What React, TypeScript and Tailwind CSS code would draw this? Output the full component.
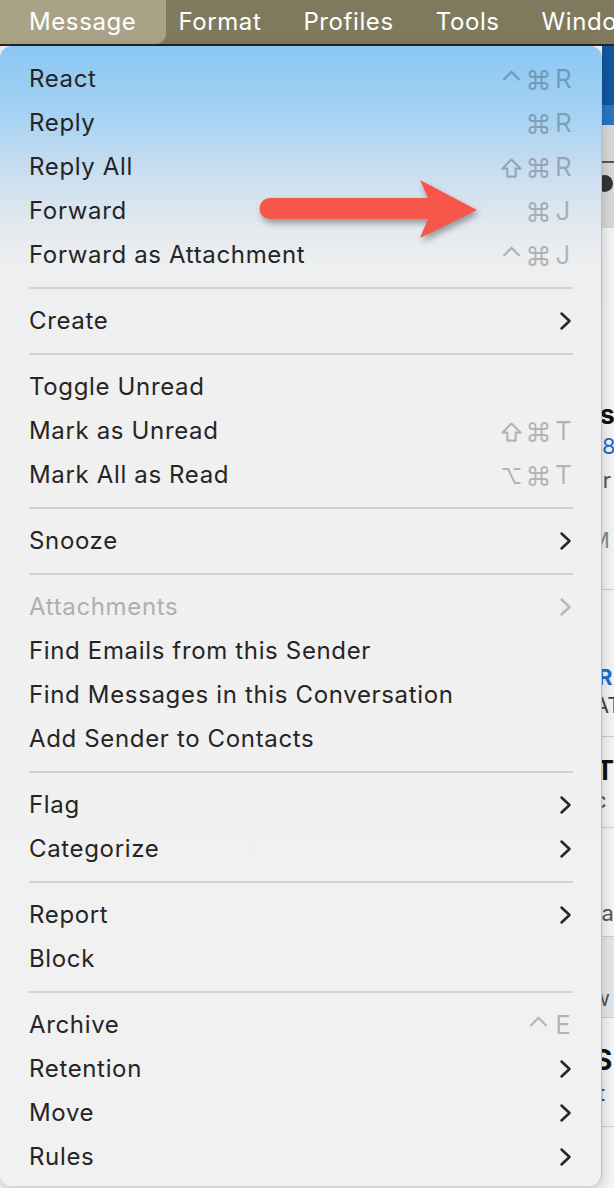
import React from "react";

type Item =
  | { sep: true }
  | { label: string; keys?: string[]; sub?: boolean; disabled?: boolean };

const items: Item[] = [
  { label: "React", keys: ["ctrl", "cmd", "R"] },
  { label: "Reply", keys: ["cmd", "R"] },
  { label: "Reply All", keys: ["shift", "cmd", "R"] },
  { label: "Forward", keys: ["cmd", "J"] },
  { label: "Forward as Attachment", keys: ["ctrl", "cmd", "J"] },
  { sep: true },
  { label: "Create", sub: true },
  { sep: true },
  { label: "Toggle Unread" },
  { label: "Mark as Unread", keys: ["shift", "cmd", "T"] },
  { label: "Mark All as Read", keys: ["opt", "cmd", "T"] },
  { sep: true },
  { label: "Snooze", sub: true },
  { sep: true },
  { label: "Attachments", sub: true, disabled: true },
  { label: "Find Emails from this Sender" },
  { label: "Find Messages in this Conversation" },
  { label: "Add Sender to Contacts" },
  { sep: true },
  { label: "Flag", sub: true },
  { label: "Categorize", sub: true },
  { sep: true },
  { label: "Report", sub: true },
  { label: "Block" },
  { sep: true },
  { label: "Archive", keys: ["ctrl", "E"] },
  { label: "Retention", sub: true },
  { label: "Move", sub: true },
  { label: "Rules", sub: true },
];

function Chevron({ disabled }: { disabled?: boolean }) {
  return (
    <svg width="14" height="22" viewBox="0 0 14 22" className="block -mr-[1px]">
      <path
        d="M3.5 3.5 L11.5 11 L3.5 18.5"
        fill="none"
        stroke={disabled ? "#b9b9b9" : "#252525"}
        strokeWidth="2.5"
        strokeLinecap="round"
        strokeLinejoin="round"
      />
    </svg>
  );
}

const glyphs: Record<string, string> = {
  cmd: "M7 7 V4 A3 3 0 1 0 4 7 H16 A3 3 0 1 0 13 4 V16 A3 3 0 1 0 16 13 H4 A3 3 0 1 0 7 16 Z",
  ctrl: "M2 10 L10 1.8 L18 10",
  shift: "M10 1.6 L19 10.6 H14.2 V18.6 H5.8 V10.6 H1 Z",
  opt: "M1 3 H6.6 L13.4 17 H19 M12 3 H19",
};

function Key({ k }: { k: string }) {
  if (glyphs[k]) {
    return (
      <svg
        width="21"
        height="20"
        viewBox="-0.5 0 21 20"
        className="block translate-y-[1px]"
      >
        <path
          d={glyphs[k]}
          fill="none"
          stroke="currentColor"
          strokeWidth={k === "cmd" ? 1.9 : 2.1}
          strokeLinejoin={k === "ctrl" ? "miter" : "round"}
        />
      </svg>
    );
  }
  return (
    <span className="w-[16px] text-center text-[26px] leading-none" style={{ fontFamily: "Inter, sans-serif" }}>
      {k}
    </span>
  );
}

export default function App() {
  return (
    <div
      className="w-[614px] h-[1188px] overflow-hidden bg-[#f4f4f4] flex flex-col"
      style={{ fontFamily: "Inter, 'Noto Sans', sans-serif" }}
    >
      {/* menu bar */}
      <div className="h-[44px] bg-[#7f7a5e] flex items-center gap-[42px] pl-[29px] text-white text-[24px] tracking-[0.6px] whitespace-nowrap shrink-0">
        <span className="-ml-[29px] -mr-[30px] pl-[29px] pr-[30px] h-[44px] flex items-center bg-[#a8a386] rounded-br-[10px]">
          Message
        </span>
        <span>Format</span>
        <span>Profiles</span>
        <span>Tools</span>
        <span>Window</span>
      </div>
      <div className="h-[2px] bg-[#222] shrink-0" />

      <div className="flex flex-1 min-h-0 relative">
        {/* dropdown menu */}
        <div className="relative z-10 w-[602px] shrink-0 h-[1140px] rounded-[12px] border-r border-[#bdbdbd] shadow-[0_4px_14px_rgba(0,0,0,0.2)] bg-[linear-gradient(180deg,#8ac7f4_0px,#a6d2f3_70px,#c6dcf0_120px,#dde6ee_165px,#eceef0_210px,#f0f0f0_300px,#f1f1f1_100%)] pt-[11px] pb-[7px]">
          {items.map((it, i) =>
            "sep" in it ? (
              <div key={i} className="h-[22px] flex items-center pl-[29px] pr-[28px]">
                <div className="h-[2px] w-full bg-[#d3d3d3]" />
              </div>
            ) : (
              <div
                key={i}
                className={`h-[44px] flex items-center justify-between pl-[29px] pr-[30px] text-[24px] tracking-[0.65px] ${
                  it.disabled ? "text-[#afafaf]" : "text-[#252525]"
                }`}
              >
                <span className="whitespace-nowrap">{it.label}</span>
                {it.keys && (
                  <span className="flex items-center gap-[6px] text-black/25 tracking-normal">
                    {it.keys.map((k, j) => (
                      <Key key={j} k={k} />
                    ))}
                  </span>
                )}
                {it.sub && <Chevron disabled={it.disabled} />}
              </div>
            )
          )}
        </div>

        {/* background app strip */}
        <div className="flex-1 flex flex-col text-[22px] leading-none whitespace-nowrap">
          <div className="h-[59px] shrink-0 bg-[#12569e]" />
          <div className="h-[20px] shrink-0 bg-[#2a74c4]" />
          <div className="h-[38px] shrink-0 bg-[#d8d8d8] border-b-2 border-[#555]" />
          <div className="h-[65px] shrink-0 bg-[#d8d8d8] pt-[12px]">
            <div className="w-[17px] h-[17px] rounded-full bg-[#333] -ml-[6px]" />
          </div>
          <div className="h-[172px] shrink-0" />
          <div className="h-[28px] shrink-0 flex items-center font-bold text-[#111] -ml-[12px] text-[27px]">ts</div>
          <div className="h-[36px] shrink-0 flex items-center text-[#1a6fd0] -ml-[14px]">08</div>
          <div className="h-[32px] shrink-0 flex items-center text-[#555] -ml-[12px]">er</div>
          <div className="h-[24px] shrink-0" />
          <div className="h-[40px] shrink-0 flex items-center text-[#888] -ml-[12px]">M</div>
          <div className="h-[30px] shrink-0 border-b border-[#ccc]" />
          <div className="h-[70px] shrink-0" />
          <div className="h-[34px] shrink-0 flex items-center text-[#1a6fd0] font-bold -ml-[4px]">R</div>
          <div className="h-[22px] shrink-0 flex items-center text-[#444] -ml-[8px]">AT</div>
          <div className="h-[21px] shrink-0 border-b border-[#ccc]" />
          <div className="h-[13px] shrink-0" />
          <div className="h-[40px] shrink-0 flex items-center font-bold text-[#111] text-[27px] -ml-[6px]">T</div>
          <div className="h-[20px] shrink-0 flex items-center text-[#444] -ml-[8px]">c</div>
          <div className="h-[18px] shrink-0 border-b border-[#ccc]" />
          <div className="h-[72px] shrink-0" />
          <div className="h-[26px] shrink-0 flex items-center text-[#555] -ml-[14px]">da</div>
          <div className="h-[11px] shrink-0 border-b border-[#ccc]" />
          <div className="h-[81px] shrink-0 bg-[#e3e6eb] text-[#555] -ml-[10px] pl-[10px] pt-[50px] border-b border-[#ccc]">
            <span className="-ml-[10px]">w</span>
          </div>
          <div className="h-[27px] shrink-0" />
          <div className="h-[30px] shrink-0 flex items-center font-bold text-[#111] text-[28px] -ml-[8px]">S</div>
          <div className="h-[35px] shrink-0 flex items-center text-[#444] -ml-[4px]">t</div>
          <div className="h-[17px] shrink-0 border-b border-[#ccc]" />
        </div>
      </div>

      {/* annotation arrow */}
      <svg
        className="absolute left-[250px] top-[172px] z-20"
        width="240"
        height="80"
        viewBox="0 0 240 80"
        style={{ filter: "drop-shadow(2px 4px 3px rgba(0,0,0,0.35))" }}
      >
        <path
          d="M20 26 L178 26 L170 8 L227 38 L170 66 L178 47 L20 47 A10.5 10.5 0 0 1 20 26 Z"
          fill="#f7574a"
        />
      </svg>
    </div>
  );
}
